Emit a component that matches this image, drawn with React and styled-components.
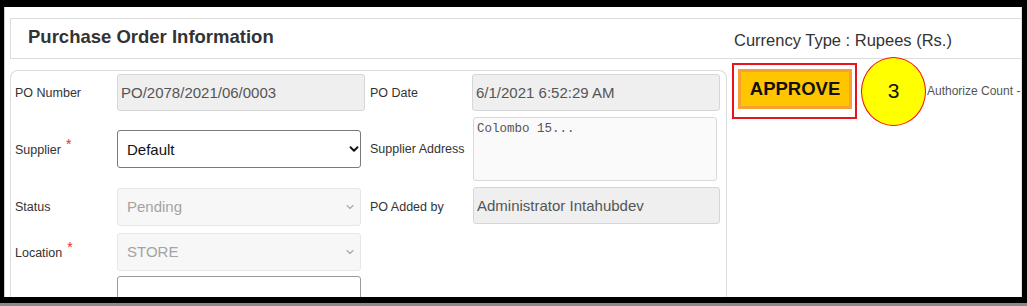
import React from 'react';
import styled, { createGlobalStyle } from 'styled-components';
import { ChevronDown } from 'lucide-react';

const GlobalStyle = createGlobalStyle`
  html, body {
    margin: 0;
    padding: 0;
    background: #000;
  }
  body {
    font-family: "Liberation Sans", Arial, sans-serif;
  }
`;

export default function App() {
  return (
    <Frame>
      <GlobalStyle />
      <Screen>
        <Header>
          <Title>Purchase Order Information</Title>
          <Currency>Currency Type : Rupees (Rs.)</Currency>
        </Header>
        <Body>
          <Panel>
            <FormGrid>
              <Label>PO Number</Label>
              <TextInput readOnly value='PO/2078/2021/06/0003' />
              <Label>PO Date</Label>
              <TextInput readOnly value='6/1/2021 6:52:29 AM' />

              <Label>
                Supplier<Star>*</Star>
              </Label>
              <SelectWrap>
                <Select defaultValue='Default'>
                  <option>Default</option>
                </Select>
                <Chevron>
                  <ChevronDown size={14} strokeWidth={3.2} />
                </Chevron>
              </SelectWrap>
              <Label>Supplier Address</Label>
              <Address readOnly value='Colombo 15...' />

              <Label>Status</Label>
              <SelectWrap>
                <Select disabled defaultValue='Pending'>
                  <option>Pending</option>
                </Select>
                <Chevron $disabled>
                  <ChevronDown size={12} strokeWidth={2.2} />
                </Chevron>
              </SelectWrap>
              <Label>PO Added by</Label>
              <TextInput $shift readOnly value='Administrator Intahubdev' />

              <Label>
                Location<Star>*</Star>
              </Label>
              <SelectWrap>
                <Select disabled defaultValue='STORE'>
                  <option>STORE</option>
                </Select>
                <Chevron $disabled>
                  <ChevronDown size={12} strokeWidth={2.2} />
                </Chevron>
              </SelectWrap>
              <span />
              <span />

              <span />
              <BlankInput />
            </FormGrid>
          </Panel>
          <Side>
            <ApproveFrame>
              <ApproveButton type='button'>APPROVE</ApproveButton>
            </ApproveFrame>
            <Marker>3</Marker>
            <AuthText>Authorize Count -</AuthText>
          </Side>
        </Body>
      </Screen>
      <BottomStrip />
    </Frame>
  );
}

const Frame = styled.div`
  width: 1027px;
  height: 306px;
  background: #000;
  box-sizing: border-box;
  padding: 7px 5px 0 4px;
  display: flex;
  flex-direction: column;
  overflow: hidden;
`;

const Screen = styled.div`
  height: 290px;
  flex-shrink: 0;
  background: #fff;
  box-sizing: border-box;
  border-left: 1px solid #cfcfcf;
  border-right: 1px solid #e2e2e2;
  padding: 11px 0 0 5px;
  overflow: hidden;
`;

const BottomStrip = styled.div`
  margin: 6px -5px 0 -4px;
  height: 3px;
  background: #8a8a8a;
`;

const Header = styled.div`
  height: 41px;
  box-sizing: border-box;
  border: 1px solid #dcdcdc;
  border-right: none;
  display: grid;
  grid-template-columns: 717px 1fr;
  align-items: center;
`;

const Title = styled.h1`
  margin: -3px 0 0;
  padding-left: 17px;
  font-size: 18.5px;
  font-weight: bold;
  color: #333;
`;

const Currency = styled.div`
  margin-top: 3px;
  padding-left: 6px;
  font-size: 16.5px;
  color: #333;
  white-space: nowrap;
`;

const Body = styled.div`
  display: flex;
  align-items: flex-start;
`;

const Panel = styled.div`
  margin-top: 11px;
  width: 717px;
  height: 240px;
  flex-shrink: 0;
  box-sizing: border-box;
  border: 1px solid #dcdcdc;
  border-bottom: none;
  border-radius: 8px 8px 0 0;
  padding: 3px 4px 0;
`;

const FormGrid = styled.div`
  display: grid;
  grid-template-columns: 102px 253px 102px 250px;
  grid-template-rows: 37px 64px 39px 39px 40px;
  row-gap: 6px;
  align-items: center;
`;

const Label = styled.label`
  font-size: 12.5px;
  color: #333;
  white-space: nowrap;
`;

const Star = styled.span`
  color: #e0302a;
  font-size: 14px;
  margin-left: 5px;
  position: relative;
  top: -5px;
`;

const TextInput = styled.input`
  width: ${(p) => (p.$shift ? '247px' : '248px')};
  margin-left: ${(p) => (p.$shift ? '1px' : '0')};
  height: 37px;
  align-self: stretch;
  box-sizing: border-box;
  border: 1px solid #d6d6d6;
  border-radius: 3px;
  background: #efefef;
  color: #555;
  font-family: "Liberation Sans", Arial, sans-serif;
  font-size: 15px;
  padding: 0 3px;
  outline: none;
`;

const SelectWrap = styled.div`
  position: relative;
  width: 244px;
  height: 38px;
`;

const Select = styled.select`
  appearance: none;
  width: 100%;
  height: 100%;
  box-sizing: border-box;
  border: 1px solid #7a7a7a;
  border-radius: 3px;
  background: #fff;
  color: #111;
  font-family: "Liberation Sans", Arial, sans-serif;
  font-size: 15px;
  padding: 0 0 0 9px;
  outline: none;

  &:disabled {
    border-color: #e6e6e6;
    background: #f7f7f7;
    color: #a3a3a3;
    opacity: 1;
  }
`;

const Chevron = styled.span`
  position: absolute;
  top: 50%;
  right: ${(p) => (p.$disabled ? '5px' : '0')};
  transform: translateY(-50%);
  display: flex;
  color: ${(p) => (p.$disabled ? '#a8a8a8' : '#111')};
  pointer-events: none;
`;

const Address = styled.textarea`
  width: 244px;
  height: 64px;
  margin-left: 1px;
  box-sizing: border-box;
  border: 1px solid #d9d9d9;
  border-radius: 3px;
  background: #fafafa;
  color: #555;
  font-family: "Liberation Mono", "DejaVu Sans Mono", monospace;
  font-size: 12.5px;
  padding: 4px 3px;
  resize: none;
  outline: none;
`;

const BlankInput = styled.input`
  width: 244px;
  height: 40px;
  margin-top: -2px;
  box-sizing: border-box;
  border: 1px solid #9a9a9a;
  border-radius: 3px;
  background: #fff;
  outline: none;
`;

const Side = styled.div`
  margin-top: 4px;
  padding-left: 5px;
  height: 56px;
  flex: 1;
  min-width: 0;
  display: flex;
  align-items: center;
`;

const ApproveFrame = styled.div`
  width: 125px;
  height: 56px;
  flex-shrink: 0;
  box-sizing: border-box;
  border: 2px solid #e8141b;
  padding: 4px 3px 4px 4px;
`;

const ApproveButton = styled.button`
  width: 114px;
  height: 40px;
  box-sizing: border-box;
  border: 3px solid #f6a036;
  background: #ffc600;
  color: #111;
  font-family: "Liberation Sans", Arial, sans-serif;
  font-size: 18.5px;
  font-weight: bold;
  padding: 0;
  cursor: pointer;
`;

const Marker = styled.div`
  width: 65px;
  height: 69px;
  flex-shrink: 0;
  margin-left: 4px;
  box-sizing: border-box;
  border: 1.5px solid #e11;
  border-radius: 50%;
  background: #ffff00;
  display: flex;
  align-items: center;
  justify-content: center;
  font-size: 21px;
  color: #111;
  position: relative;
`;

const AuthText = styled.span`
  margin-left: 1px;
  font-size: 12px;
  color: #555;
  white-space: nowrap;
`;
